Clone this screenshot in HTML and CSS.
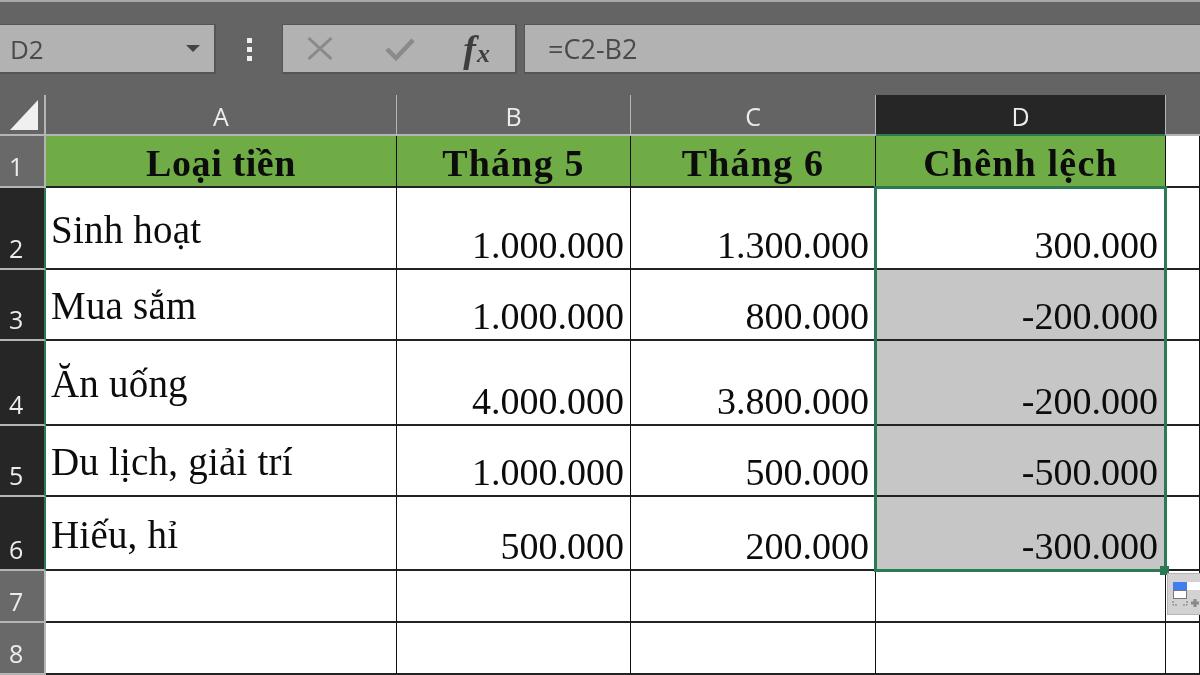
FILE: index.html
```html
<!DOCTYPE html>
<html lang="vi">
<head>
<meta charset="utf-8">
<title>Bảng chênh lệch</title>
<link rel="stylesheet" href="styles.css">
</head>
<body>
<div class="app">
  <div class="toolbar">
    <div class="box name-box"><span>D2</span><span class="caret"></span></div>
    <div class="grip"><i></i><i></i><i></i></div>
    <div class="box fx-box">
      <svg class="ico" width="26" height="23" viewBox="0 0 26 23"><path d="M1.5 1 L24.5 22 M24.5 1 L1.5 22" fill="none" stroke="#8a8a8a" stroke-width="3"/></svg>
      <svg class="ico" width="30" height="24" viewBox="0 0 30 24"><path d="M2 12 L11 21 L28 3" fill="none" stroke="#8a8a8a" stroke-width="4.5"/></svg>
      <span class="fx"><span class="fx-f">f</span><span class="fx-x">x</span></span>
    </div>
    <div class="box formula"><span>=C2-B2</span></div>
  </div>
  <div class="sheet">
    <div class="corner"><span class="tri"></span></div>
    <div class="ch">A</div><div class="ch">B</div><div class="ch">C</div><div class="ch active">D</div><div class="ch blank"></div>

    <div class="rh">1</div>
    <div class="c head tight">Loại tiền</div><div class="c head">Tháng 5</div><div class="c head">Tháng 6</div><div class="c head">Chênh lệch</div><div class="c"></div>

    <div class="rh on">2</div>
    <div class="c text"><span>Sinh hoạt</span></div><div class="c num">1.000.000</div><div class="c num">1.300.000</div><div class="c num d">300.000</div><div class="c"></div>

    <div class="rh on">3</div>
    <div class="c text"><span>Mua sắm</span></div><div class="c num">1.000.000</div><div class="c num">800.000</div><div class="c num d g">-200.000</div><div class="c"></div>

    <div class="rh on">4</div>
    <div class="c text"><span>Ăn uống</span></div><div class="c num">4.000.000</div><div class="c num">3.800.000</div><div class="c num d g">-200.000</div><div class="c"></div>

    <div class="rh on">5</div>
    <div class="c text"><span>Du lịch, giải trí</span></div><div class="c num">1.000.000</div><div class="c num">500.000</div><div class="c num d g">-500.000</div><div class="c"></div>

    <div class="rh on">6</div>
    <div class="c text"><span>Hiếu, hỉ</span></div><div class="c num">500.000</div><div class="c num">200.000</div><div class="c num d g">-300.000</div><div class="c"></div>

    <div class="rh">7</div>
    <div class="c"></div><div class="c"></div><div class="c"></div><div class="c"></div><div class="c"></div>

    <div class="rh">8</div>
    <div class="c"></div><div class="c"></div><div class="c"></div><div class="c"></div><div class="c"></div>

    <div class="selection"><span class="handle"></span></div>
    <div class="paste">
      <svg width="40" height="42" viewBox="0 0 40 42">
        <rect x="5" y="8" width="14" height="8" fill="#3f7df0"/>
        <rect x="19" y="8" width="14" height="8" fill="#fff"/>
        <rect x="5.5" y="16.5" width="13" height="8" fill="#fff" stroke="#777"/>
        <path d="M5 27v4h4M15 31h4v-4" fill="none" stroke="#777" stroke-dasharray="2 1"/>
        <path d="M23 29h8M27 25v8" stroke="#888" stroke-width="3"/>
      </svg>
    </div>
  </div>
</div>
</body>
</html>
```
FILE: styles.css
```css
* { box-sizing: border-box; }
html, body { margin: 0; height: 100%; }
body { overflow: hidden; background: #646464; font-family: "Open Sans", "Noto Sans", sans-serif; }
.app { width: 1200px; height: 675px; overflow: hidden; filter: blur(0.45px); }

.toolbar {
  height: 95px;
  border-top: 2px solid #a9a9a9;
  padding: 22px 0 21px;
  display: flex;
  align-items: stretch;
  background: #646464;
}
.box {
  background: #b2b2b2;
  border: 1px solid #555;
  border-width: 1px 2px 2px 1px;
  display: flex;
  align-items: center;
  color: #4a4a4a;
  font-size: 26px;
}
.name-box { width: 216px; justify-content: space-between; padding: 0 14px 0 10px; border-left: 0; }
.caret { width: 0; height: 0; border: 7px solid transparent; border-top: 7px solid #444; border-bottom: 0; }
.grip { width: 66px; display: flex; flex-direction: column; align-items: center; justify-content: center; gap: 4px; }
.grip i { width: 5px; height: 5px; background: #eee; display: block; }
.fx-box { width: 235px; padding: 0 25px 0 24px; justify-content: space-between; }
.ico { display: block; }
.fx { font-family: "Liberation Serif", serif; font-style: italic; font-weight: bold; color: #3e3e3e; display: flex; align-items: baseline; margin-left: -3px; }
.fx-f { font-size: 38px; }
.fx-x { font-size: 26px; margin-left: 1px; }
.formula { margin-left: 7px; flex: 1; padding-left: 23px; border-right: 0; font-size: 27px; }

.sheet {
  position: relative;
  display: grid;
  grid-template-columns: 46px 351px 234px 245px 290px 34px;
  grid-template-rows: 41px 52px 82px 71px 85px 71px 74px 52px 52px;
  background: #fff;
  font-family: "Liberation Serif", serif;
  color: #0c0c0c;
}
.corner { background: #646464; border-right: 2px solid #b5b5b5; border-bottom: 2px solid #b5b5b5; display: flex; align-items: flex-end; justify-content: flex-end; padding: 0 6px 4px 0; }
.tri { width: 28px; height: 30px; background: #f0f0f0; clip-path: polygon(100% 0, 100% 100%, 0 100%); }
.ch, .rh { font-family: "Open Sans", "Noto Sans", sans-serif; color: #ececec; background: #646464; font-size: 25px; display: flex; }
.ch { align-items: center; justify-content: center; border-right: 1px solid #b5b5b5; border-bottom: 2px solid #b5b5b5; padding-top: 2px; }
.ch.active { background: #262626; border-bottom-color: #2b7a53; }
.ch.blank { border-right: 0; }
.rh { align-items: flex-end; padding: 0 0 3px 9px; background: #696969; border-right: 2px solid #b5b5b5; border-bottom: 2px solid #b5b5b5; }
.rh.on { background: #262626; border-right-color: #2b7a53; }

.c { border-right: 1px solid #111; border-bottom: 2px solid #222; font-size: 38px; display: flex; min-width: 0; }
.head { background: #6fac46; font-weight: bold; align-items: center; justify-content: center; letter-spacing: 1.2px; padding-top: 3px; }
.head.tight { letter-spacing: 0.6px; }
.num { align-items: flex-end; justify-content: flex-end; padding: 0 6px 0 0; line-height: 46px; }
.num.d { padding-right: 7px; }
.text { align-items: center; padding: 2px 0 0 5px; font-size: 39px; letter-spacing: 0.2px; }
.g { background: #c6c6c6; }

.selection {
  position: absolute;
  left: 874px; top: 91px;
  width: 293px; height: 386px;
  border: 3px solid #2b7a53;
  pointer-events: none;
}
.handle { position: absolute; right: -5px; bottom: -6px; width: 9px; height: 9px; background: #2b7a53; }
.paste {
  position: absolute;
  left: 1167px; top: 478px;
  width: 40px; height: 42px;
  background: #d2d2d2;
  border: 1px solid #b5b5b5;
}
.paste svg { display: block; }
```
